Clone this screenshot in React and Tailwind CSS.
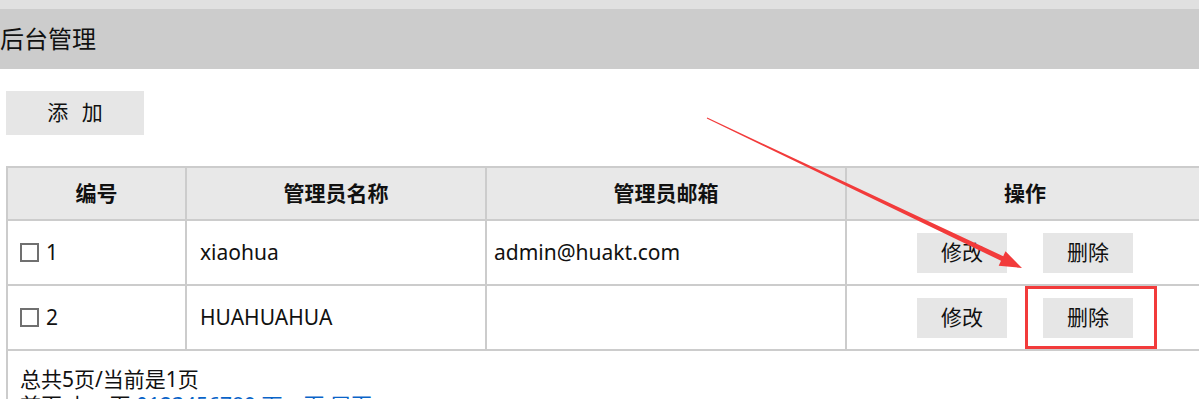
const font = { fontFamily: '"Noto Sans", "Noto Sans CJK SC", sans-serif' };

const rows = [
  { id: 1, name: 'xiaohua', email: 'admin@huakt.com' },
  { id: 2, name: 'HUAHUAHUA', email: '' },
];

const Cell = ({ children, className = '' }) => (
  <div className={`border-r-2 border-b-2 border-[#cccccc] flex items-center ${className}`}>
    {children}
  </div>
);

const GrayButton = ({ children }) => (
  <button className="w-[90px] h-[40px] bg-[#e6e6e6] text-[21px] text-[#111]">{children}</button>
);

// 红色箭头和框是截图上的标注
const Annotation = () => (
  <svg className="absolute left-0 top-0 pointer-events-none" width="1199" height="399">
    <polygon
      points="706.8,118.45 707.2,117.55 1003.2,256.2 1005.5,251.3 1022,268 998.7,265.7 1001,260.8"
      fill="#f23b3b"
    />
    <rect x="1026.5" y="287.5" width="129" height="60" fill="none" stroke="#f23b3b" strokeWidth="3" />
  </svg>
);

export default function App() {
  return (
    <div className="relative w-[1199px] h-[399px] overflow-hidden bg-white text-[#111]" style={font}>
      <div className="h-[9px] bg-[#e0e0e0]" />
      <div className="h-[60px] bg-[#cccccc] flex items-center text-[24px] leading-none">后台管理</div>

      <div className="pl-[6px] pt-[22px]">
        <button className="w-[138px] h-[44px] bg-[#e6e6e6] text-[21px] tracking-[4px] pl-[4px]">添 加</button>
      </div>

      <div className="ml-[6px] mt-[31px] w-[1199px] border-l-2 border-t-2 border-[#cccccc] grid grid-cols-[179px_300px_360px_358px] text-[21px]">
        <Cell className="h-[53px] bg-[#e8e8e8] justify-center font-bold">编号</Cell>
        <Cell className="h-[53px] bg-[#e8e8e8] justify-center font-bold">管理员名称</Cell>
        <Cell className="h-[53px] bg-[#e8e8e8] justify-center font-bold">管理员邮箱</Cell>
        <Cell className="h-[53px] bg-[#e8e8e8] justify-center font-bold">操作</Cell>

        {rows.map((r) => (
          <div key={r.id} className="contents">
            <Cell className="h-[65px] pl-[12px] gap-[7px]">
              <span className="w-[19px] h-[19px] border-2 border-[#707070] inline-block" />
              <span>{r.id}</span>
            </Cell>
            <Cell className="h-[65px] pl-[13px]">{r.name}</Cell>
            <Cell className="h-[65px] pl-[7px]">{r.email}</Cell>
            <Cell className="h-[65px] justify-center gap-[36px]">
              <GrayButton>修改</GrayButton>
              <GrayButton>删除</GrayButton>
            </Cell>
          </div>
        ))}

        <div className="col-span-4 pl-[12px] pt-[15px] leading-[26px]">
          <div>总共5页/当前是1页</div>
          <div>
            首页 上一页 <span className="text-[#0a64c8]">0123456789 下一页 尾页</span>
          </div>
        </div>
      </div>

      <Annotation />
    </div>
  );
}
